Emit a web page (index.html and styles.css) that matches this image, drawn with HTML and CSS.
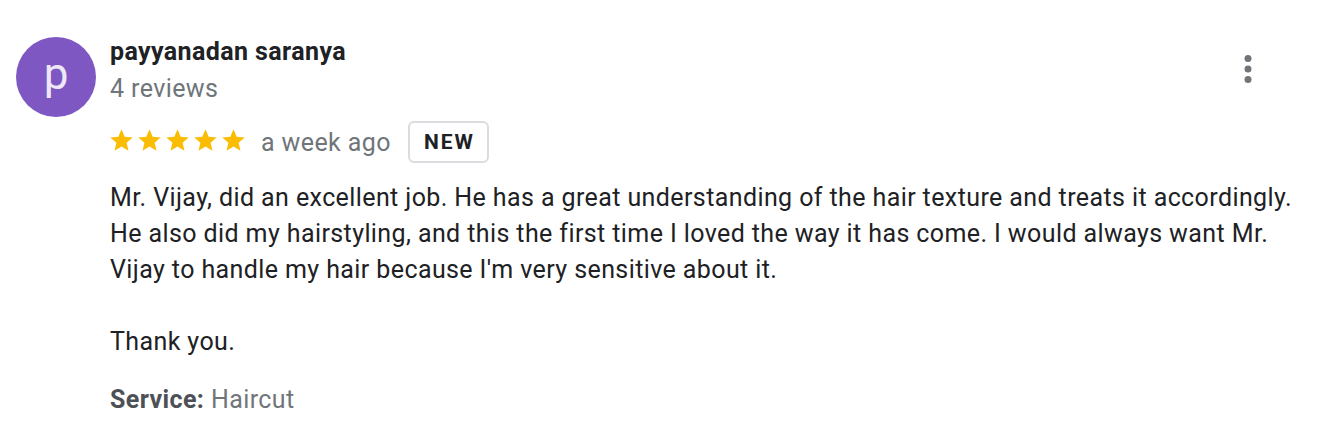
FILE: index.html
```html
<!DOCTYPE html>
<html lang="en">
<head>
    <meta charset="UTF-8">
    <meta name="viewport" content="width=device-width, initial-scale=1.0">
    <title>Review</title>
    <link rel="stylesheet" href="styles.css">
</head>
<body>

    <div class="review">
        <div class="avatar">p</div>
        <div class="info">
            <div class="author">
                <div class="name">payyanadan saranya</div>
                <div class="count">4 reviews</div>
            </div>
            <button class="more" aria-label="More options">
                <svg viewBox="0 0 24 24" width="42" height="42">
                    <circle cx="12" cy="6" r="2"/>
                    <circle cx="12" cy="12" r="2"/>
                    <circle cx="12" cy="18" r="2"/>
                </svg>
            </button>
        </div>

        <div class="body">
            <div class="meta">
                <div class="stars">
                    <svg viewBox="0 0 24 24"><path d="M12 17.27L18.18 21l-1.64-7.03L22 9.24l-7.19-.61L12 2 9.19 8.63 2 9.24l5.46 4.73L5.82 21z"/></svg>
                    <svg viewBox="0 0 24 24"><path d="M12 17.27L18.18 21l-1.64-7.03L22 9.24l-7.19-.61L12 2 9.19 8.63 2 9.24l5.46 4.73L5.82 21z"/></svg>
                    <svg viewBox="0 0 24 24"><path d="M12 17.27L18.18 21l-1.64-7.03L22 9.24l-7.19-.61L12 2 9.19 8.63 2 9.24l5.46 4.73L5.82 21z"/></svg>
                    <svg viewBox="0 0 24 24"><path d="M12 17.27L18.18 21l-1.64-7.03L22 9.24l-7.19-.61L12 2 9.19 8.63 2 9.24l5.46 4.73L5.82 21z"/></svg>
                    <svg viewBox="0 0 24 24"><path d="M12 17.27L18.18 21l-1.64-7.03L22 9.24l-7.19-.61L12 2 9.19 8.63 2 9.24l5.46 4.73L5.82 21z"/></svg>
                </div>
                <span class="date">a week ago</span>
                <span class="badge">NEW</span>
            </div>

            <p class="text">Mr. Vijay, did an excellent job. He has a great understanding of the hair texture and treats it accordingly. He also did my hairstyling, and this the first time I loved the way it has come. I would always want Mr. Vijay to handle my hair because I'm very sensitive about it.<br><br>Thank you.</p>

            <p class="service"><b>Service:</b> Haircut</p>
        </div>
    </div>

</body>
</html>
```

FILE: styles.css
```css
body {
    margin: 0;
    background: #fff;
    font-family: Roboto, "Liberation Sans", Arial, sans-serif;
    color: #202124;
    letter-spacing: 0.4px;
}
.review {
    display: grid;
    grid-template-columns: 80px 1fr;
    column-gap: 14px;
    padding: 37px 20px 0 16px;
}
.avatar {
    width: 80px;
    height: 80px;
    border-radius: 50%;
    background: #7e57c2;
    color: #ede7f6;
    font-size: 44px;
    letter-spacing: 0;
    line-height: 1;
    display: flex;
    align-items: center;
    justify-content: center;
    padding-bottom: 6px;
    box-sizing: border-box;
}
.info {
    display: flex;
    justify-content: space-between;
    align-items: flex-start;
}
.name {
    font-size: 25px;
    font-weight: 700;
    line-height: 30px;
}
.count {
    font-size: 25px;
    line-height: 36px;
    margin-top: 4px;
    color: #70757a;
}
.more {
    border: none;
    background: none;
    padding: 0;
    margin: 11px 35px 0 0;
    width: 42px;
    height: 42px;
    fill: #70757a;
}
.more svg {
    display: block;
}
.body {
    grid-column: 2;
    margin-top: 4px;
}
.meta {
    display: flex;
    align-items: center;
    height: 42px;
}
.stars {
    display: flex;
    gap: 1px;
    fill: #fbbc04;
    margin: -4px 0 0 -2px;
}
.stars svg {
    width: 27px;
    height: 27px;
    display: block;
}
.date {
    font-size: 25px;
    color: #70757a;
    margin-left: 14px;
}
.badge {
    margin-left: 17px;
    height: 42px;
    box-sizing: border-box;
    border: 2px solid #dadce0;
    border-radius: 6px;
    padding: 0 12px 0 14px;
    display: flex;
    align-items: center;
    font-size: 21px;
    font-weight: 700;
    letter-spacing: 2px;
    color: #202124;
}
.text {
    margin: 17px 0 0;
    font-size: 25px;
    line-height: 36px;
    color: #202124;
}
.service {
    margin: 22px 0 0;
    font-size: 25px;
    line-height: 36px;
    color: #70757a;
}
.service b {
    color: #4d5156;
}
```
